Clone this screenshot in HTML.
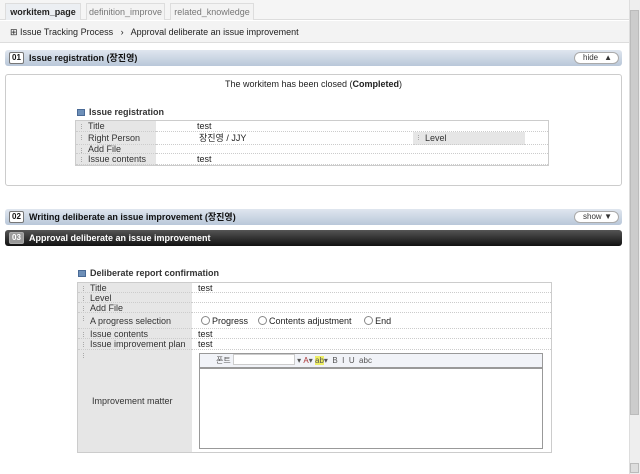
<!DOCTYPE html>
<html><head><meta charset="utf-8"><style>
*{margin:0;padding:0;box-sizing:border-box}
body{width:640px;height:474px;overflow:hidden;background:#fff;font-family:"Liberation Sans","Noto Sans CJK KR",sans-serif;font-size:9px;color:#222;position:relative}
.a{position:absolute}
.tab{position:absolute;top:3px;height:17px;border:1px solid #ddd;border-bottom:none;background:#f3f3f3;color:#777;font-size:9px;line-height:16px;text-align:center}
.hdr{position:absolute;left:5px;width:617px;height:16px;border-radius:3px;background:linear-gradient(#dfe6ef,#b9c7d9);font-weight:bold;font-size:9px;line-height:16px;color:#111}
.badge{position:absolute;left:4px;top:2px;width:15px;height:12px;background:#fff;border:1px solid #777;border-radius:2px;font-size:8px;line-height:10px;text-align:center}
.btn{position:absolute;right:3px;top:2px;width:45px;height:12px;background:#fff;border:1px solid #aaa;border-radius:6px;font-size:8px;line-height:10px;font-weight:normal;padding-left:8px;color:#333}
.lbl{position:absolute;background:#e6e6e6;color:#333;padding-left:12px;border-bottom:1px dotted #ccc}
.lbl:before{content:"";position:absolute;left:5px;top:3px;width:2px;height:5px;border-left:1px dotted #aaa}
.val{position:absolute;border-bottom:1px dotted #ccc}
.ico{display:inline-block;width:8px;height:7px;background:#6d8fb8;border:1px solid #4a6a96;margin-right:4px;vertical-align:-1px}
.rad{display:inline-block;width:9px;height:9px;border:1px solid #888;border-radius:50%;margin-right:2px;vertical-align:-1px}
</style></head><body>
<div class="a" style="left:0;top:0;width:629px;height:20px;background:#f5f5f5;border-bottom:1px solid #ddd"></div>
<div class="tab" style="left:5px;width:76px;background:#eceff3;color:#222;font-weight:bold">workitem_page</div>
<div class="tab" style="left:86px;width:79px">definition_improve</div>
<div class="tab" style="left:170px;width:84px">related_knowledge</div>
<div class="a" style="left:0;top:21px;width:629px;height:22px;background:#f3f3f3;border-bottom:1px solid #ddd"></div>
<div class="a" style="left:10px;top:27px;color:#222">⊞ Issue Tracking Process &nbsp;&nbsp;›&nbsp;&nbsp; Approval deliberate an issue improvement</div>

<div class="hdr" style="top:50px"><span class="badge">01</span><span style="position:absolute;left:24px">Issue registration (장진영)</span><span class="btn">hide <span style="position:absolute;right:6px">▲</span></span></div>
<div class="a" style="left:5px;top:74px;width:617px;height:112px;border:1px solid #ccc;border-radius:3px"></div>
<div class="a" style="left:0;top:79px;width:627px;text-align:center">The workitem has been closed (<b>Completed</b>)</div>
<div class="a" style="left:77px;top:107px;font-weight:bold;color:#333"><span class="ico"></span>Issue registration</div>
<div class="a" style="left:75px;top:120px;width:474px;height:46px;border:1px solid #ccc;background:#fff"></div>
<div class="lbl" style="left:76px;top:121px;width:80px;height:11px">Title</div><div class="val" style="left:156px;top:121px;width:392px;height:11px;padding-left:41px">test</div>
<div class="lbl" style="left:76px;top:132px;width:80px;height:13px;line-height:13px">Right Person</div><div class="val" style="left:156px;top:132px;width:392px;height:13px;line-height:13px;padding-left:43px">장진영 / JJY</div>
<div class="lbl" style="left:413px;top:132px;width:112px;height:13px;line-height:13px">Level</div>
<div class="lbl" style="left:76px;top:145px;width:80px;height:9px;line-height:9px">Add File</div><div class="val" style="left:156px;top:145px;width:392px;height:9px"></div>
<div class="lbl" style="left:76px;top:154px;width:80px;height:11px">Issue contents</div><div class="val" style="left:156px;top:154px;width:392px;height:11px;padding-left:41px">test</div>

<div class="hdr" style="top:209px"><span class="badge">02</span><span style="position:absolute;left:24px">Writing deliberate an issue improvement (장진영)</span><span class="btn">show <span style="position:absolute;right:6px">▼</span></span></div>
<div class="hdr" style="top:230px;background:linear-gradient(#555,#111);color:#fff"><span class="badge" style="background:#999;color:#fff;border-color:#aaa">03</span><span style="position:absolute;left:24px">Approval deliberate an issue improvement</span></div>

<div class="a" style="left:78px;top:268px;font-weight:bold;color:#333"><span class="ico"></span>Deliberate report confirmation</div>
<div class="a" style="left:77px;top:282px;width:475px;height:171px;border:1px solid #ccc;background:#e6e6e6"></div>
<div class="a" style="left:192px;top:283px;width:359px;height:169px;background:#fff"></div>
<div class="lbl" style="left:78px;top:283px;width:114px;height:10px;line-height:10px">Title</div><div class="val" style="left:192px;top:283px;width:359px;height:10px;line-height:10px;padding-left:6px">test</div>
<div class="lbl" style="left:78px;top:293px;width:114px;height:10px;line-height:10px">Level</div><div class="val" style="left:192px;top:293px;width:359px;height:10px"></div>
<div class="lbl" style="left:78px;top:303px;width:114px;height:10px;line-height:10px">Add File</div><div class="val" style="left:192px;top:303px;width:359px;height:10px"></div>
<div class="lbl" style="left:78px;top:313px;width:114px;height:16px;line-height:16px">A progress selection</div><div class="val" style="left:192px;top:313px;width:359px;height:16px;line-height:16px;padding-left:9px"><span class="rad"></span>Progress &nbsp;&nbsp;&nbsp;<span class="rad"></span>Contents adjustment &nbsp;&nbsp;&nbsp;&nbsp;<span class="rad"></span>End</div>
<div class="lbl" style="left:78px;top:329px;width:114px;height:10px;line-height:10px">Issue contents</div><div class="val" style="left:192px;top:329px;width:359px;height:10px;line-height:10px;padding-left:6px">test</div>
<div class="lbl" style="left:78px;top:339px;width:114px;height:11px;line-height:11px">Issue improvement plan</div><div class="val" style="left:192px;top:339px;width:359px;height:11px;line-height:11px;padding-left:6px">test</div>
<div class="lbl" style="left:78px;top:350px;width:114px;height:102px;line-height:102px;padding-left:14px;border:none">Improvement matter</div>
<div class="a" style="left:199px;top:353px;width:344px;height:96px;border:1px solid #999;background:#fff"></div>
<div class="a" style="left:200px;top:354px;width:342px;height:15px;background:#f1f3f8;border-bottom:2px solid #999;font-size:8px;line-height:14px;color:#555;padding-left:16px">폰트 <span style="display:inline-block;width:62px;height:11px;border:1px solid #ccc;background:#fff;vertical-align:-2px"></span> ▾ <span style="color:#a33">A</span>▾ <span style="background:#ee6">ab</span>▾ &nbsp;B &nbsp;I &nbsp;U &nbsp;abc</div>

<div class="a" style="left:629px;top:0;width:11px;height:474px;background:#eee;border-left:1px solid #ddd"></div>
<div class="a" style="left:630px;top:10px;width:9px;height:405px;background:#ccc;border:1px solid #bbb"></div>
<div class="a" style="left:630px;top:463px;width:9px;height:10px;background:#ddd;border:1px solid #bbb"></div>
</body></html>
